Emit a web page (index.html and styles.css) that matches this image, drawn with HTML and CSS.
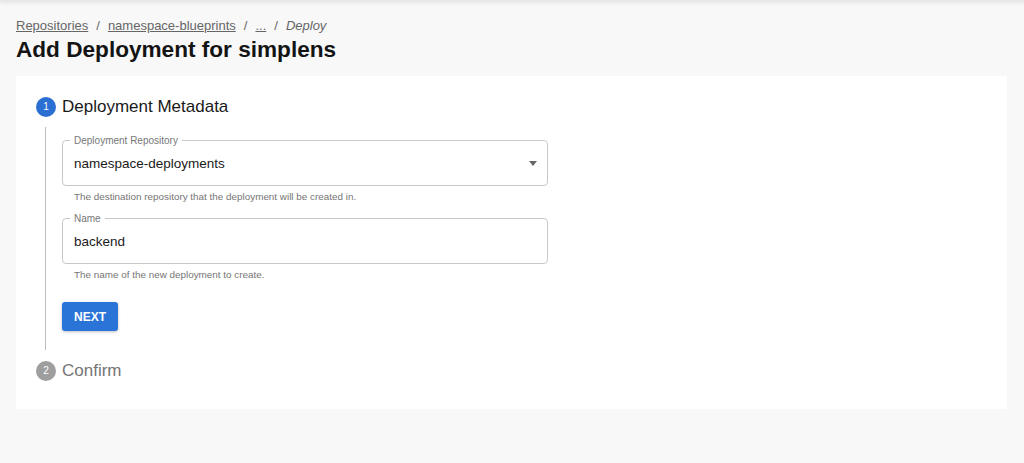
FILE: index.html
```html
<!DOCTYPE html>
<html>
<head>
<meta charset="utf-8">
<link rel="stylesheet" href="styles.css">
</head>
<body>
<div class="topshadow"></div>
<div class="page">
  <nav class="crumbs">
    <a class="crumb-link">Repositories</a><span class="sep">/</span><a class="crumb-link">namespace-blueprints</a><span class="sep">/</span><a class="crumb-link">...</a><span class="sep">/</span><span class="crumb-current">Deploy</span>
  </nav>
  <h1 class="title">Add Deployment for simplens</h1>
  <div class="card">
    <div class="step">
      <div class="step-head">
        <span class="step-icon active">1</span>
        <span class="step-label active">Deployment Metadata</span>
      </div>
      <div class="step-content">
        <div class="field">
          <fieldset class="outline"><legend>Deployment Repository</legend></fieldset>
          <div class="value">namespace-deployments</div>
          <span class="caret"></span>
        </div>
        <div class="helper">The destination repository that the deployment will be created in.</div>
        <div class="field field-2">
          <fieldset class="outline"><legend>Name</legend></fieldset>
          <div class="value">backend</div>
        </div>
        <div class="helper">The name of the new deployment to create.</div>
        <button class="btn">NEXT</button>
      </div>
    </div>
    <div class="step step-last">
      <div class="step-head">
        <span class="step-icon">2</span>
        <span class="step-label">Confirm</span>
      </div>
    </div>
  </div>
</div>
</body>
</html>
```
FILE: styles.css
```css
html, body {
  margin: 0;
  padding: 0;
  background: #f8f8f8;
  font-family: "Liberation Sans", Arial, Helvetica, sans-serif;
  color: #1a1a1a;
}
.topshadow {
  height: 0;
  box-shadow: 0 0 5px 2px rgba(0,0,0,0.12);
}
.page {
  padding: 18px 17px 0 16px;
}
.crumbs {
  font-size: 13px;
  line-height: 16px;
  color: #666;
  display: flex;
  align-items: center;
}
.crumb-link {
  color: #666;
  text-decoration: underline;
}
.sep {
  margin: 0 8px;
  color: #666;
}
.crumb-current {
  font-style: italic;
  color: #666;
}
.title {
  margin: 2px 0 0;
  font-size: 22.6px;
  line-height: 28px;
  font-weight: bold;
  color: #141414;
}
.card {
  margin-top: 12px;
  background: #fff;
  padding: 19px 20px 26px 20px;
}
.step-head {
  display: flex;
  align-items: center;
  height: 24px;
}
.step-icon {
  width: 20px;
  height: 20px;
  border-radius: 50%;
  background: #9e9e9e;
  color: #fff;
  font-size: 10px;
  line-height: 20px;
  text-align: center;
  flex: none;
}
.step-icon.active {
  background: #2a6fd1;
}
.step-label {
  margin-left: 6px;
  font-size: 17px;
  color: #757575;
}
.step-label.active {
  color: #1a1a1a;
}
.step-content {
  margin: 8px 0 0 9px;
  border-left: 1px solid #bdbdbd;
  padding: 14px 0 19px 16px;
}
.step-last {
  margin-top: 9px;
}
.field {
  position: relative;
  width: 486px;
  height: 45px;
}
.field-2 {
  margin-top: 16px;
}
.outline {
  position: absolute;
  inset: -6px 0 0 0;
  margin: 0;
  padding: 0 7px;
  border: 1px solid #c8c8c8;
  border-radius: 4px;
}
.outline legend {
  padding: 0 4px;
  font-size: 10px;
  line-height: 11px;
  color: #777;
}
.value {
  position: absolute;
  left: 12px;
  top: 0;
  line-height: 45px;
  font-size: 13.5px;
  color: #1a1a1a;
}
.caret {
  position: absolute;
  right: 11px;
  top: 20px;
  width: 0;
  height: 0;
  border-left: 4.5px solid transparent;
  border-right: 4.5px solid transparent;
  border-top: 5px solid #666;
}
.helper {
  margin: 5px 0 0 12px;
  font-size: 9.9px;
  line-height: 12px;
  color: #757575;
}
.btn {
  margin-top: 21px;
  display: block;
  width: 56px;
  height: 29px;
  border: none;
  border-radius: 3px;
  background: #2a74d8;
  color: #fff;
  font-family: "Liberation Sans", Arial, sans-serif;
  font-size: 12px;
  font-weight: bold;
  padding: 0;
  box-shadow: 0 1px 3px rgba(0,0,0,0.25);
}
```
